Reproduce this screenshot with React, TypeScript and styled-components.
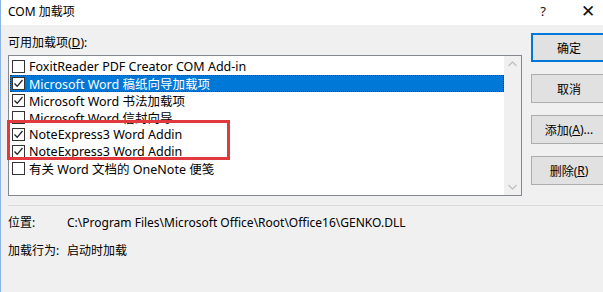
import styled, { createGlobalStyle } from 'styled-components'

const GlobalStyle = createGlobalStyle`
  html, body {
    margin: 0;
    padding: 0;
    background: #f0f0f0;
    overflow: hidden;
  }
  body {
    font-family: "Noto Sans", "Noto Sans CJK SC", sans-serif;
    font-size: 12px;
    color: #000;
  }
`

const Window = styled.div`
  width: 603px;
  height: 292px;
  overflow: hidden;
  background: #f0f0f0;
  border-left: 1px solid #8cb4e4;
  box-sizing: border-box;
  display: flex;
  flex-direction: column;
`

const TitleBar = styled.div`
  height: 25px;
  flex: none;
  background: #fff;
  display: flex;
  align-items: center;
  padding-left: 7px;
  font-size: 12px;
`

const TitleText = styled.span`
  flex: 1;
  margin-top: -3px;
`

const TitleIcon = styled.span<{ $size: number; $width: number }>`
  width: ${(p) => p.$width}px;
  flex: none;
  text-align: center;
  font-size: ${(p) => p.$size}px;
  color: #111;
  margin-top: -4px;
`

const Main = styled.div`
  display: flex;
  padding: 8px 0 0 7px;
  gap: 9px;
`

const LeftColumn = styled.div`
  width: 514px;
  flex: none;
  display: flex;
  flex-direction: column;
`

const Label = styled.div`
  height: 22px;
  line-height: 20px;
`

const Underline = styled.span`
  text-decoration: underline;
`

const ListBox = styled.div`
  position: relative;
  height: 141px;
  border: 1px solid #828790;
  background: #fff;
  display: flex;
  box-sizing: border-box;
`

const Items = styled.div`
  flex: 1;
  padding-top: 2px;
`

const Item = styled.div<{ $selected?: boolean }>`
  height: 17px;
  margin-left: 1px;
  display: flex;
  align-items: center;
  gap: 4px;
  padding-left: 2px;
  box-sizing: border-box;
  background: ${(p) => (p.$selected ? '#0078d7' : 'transparent')};
  color: ${(p) => (p.$selected ? '#fff' : '#000')};
  outline: ${(p) => (p.$selected ? '1px dotted #333' : 'none')};
  outline-offset: -1px;
  white-space: nowrap;
  font-size: 12.5px;
`

const Box = styled.span`
  width: 13px;
  height: 13px;
  flex: none;
  box-sizing: border-box;
  border: 1px solid #333;
  background: #fff;
  display: flex;
  align-items: center;
  justify-content: center;
`

const ScrollBar = styled.div`
  width: 17px;
  flex: none;
  background: #f0f0f0;
  display: flex;
  flex-direction: column;
  justify-content: space-between;
  align-items: center;
  padding: 5px 0;
`

const Highlight = styled.div`
  position: absolute;
  left: -2px;
  top: 64px;
  width: 223px;
  height: 40px;
  border: 3px solid #e2393f;
  box-sizing: border-box;
  pointer-events: none;
`

const ButtonColumn = styled.div`
  flex: none;
  display: flex;
  flex-direction: column;
  gap: 12px;
`

const Button = styled.div<{ $default?: boolean }>`
  width: 76px;
  height: 29px;
  box-sizing: border-box;
  border: ${(p) => (p.$default ? '2px solid #0078d7' : '1px solid #adadad')};
  background: #e1e1e1;
  display: flex;
  align-items: center;
  justify-content: center;
  font-size: 12px;
`

const Separator = styled.div`
  height: 1px;
  background: #dadada;
  margin: 9px 0 0 7px;
`

const InfoRow = styled.div`
  display: flex;
  height: 28px;
  align-items: center;
  padding-left: 7px;
`

const InfoBlock = styled.div`
  padding-top: 2px;
`

const InfoLabel = styled.span`
  width: 59px;
  flex: none;
`

function Check({ checked }: { checked: boolean }) {
  return (
    <Box>
      {checked && (
        <svg width="11" height="11" viewBox="0 0 11 11">
          <path d="M1.5 5.5 L4.2 8.3 L9.5 2" fill="none" stroke="#222" strokeWidth="1.3" />
        </svg>
      )}
    </Box>
  )
}

function Chevron({ up }: { up?: boolean }) {
  return (
    <svg width="9" height="6" viewBox="0 0 9 6">
      <path
        d={up ? 'M0.5 5 L4.5 1 L8.5 5' : 'M0.5 1 L4.5 5 L8.5 1'}
        fill="none"
        stroke="#c2c2c2"
        strokeWidth="1.3"
      />
    </svg>
  )
}

const items = [
  { text: 'FoxitReader PDF Creator COM Add-in', checked: false },
  { text: 'Microsoft Word 稿纸向导加载项', checked: true, selected: true },
  { text: 'Microsoft Word 书法加载项', checked: true },
  { text: 'Microsoft Word 信封向导', checked: false },
  { text: 'NoteExpress3 Word Addin', checked: true },
  { text: 'NoteExpress3 Word Addin', checked: true },
  { text: '有关 Word 文档的 OneNote 便笺', checked: false },
]

export default function App() {
  return (
    <>
      <GlobalStyle />
      <Window>
        <TitleBar>
          <TitleText>COM 加载项</TitleText>
          <TitleIcon $size={13} $width={60}>?</TitleIcon>
          <TitleIcon $size={17} $width={30}>✕</TitleIcon>
        </TitleBar>
        <Main>
          <LeftColumn>
            <Label>
              可用加载项(<Underline>D</Underline>):
            </Label>
            <ListBox>
              <Items>
                {items.map((it, i) => (
                  <Item key={i} $selected={it.selected}>
                    <Check checked={it.checked} />
                    <span>{it.text}</span>
                  </Item>
                ))}
              </Items>
              <ScrollBar>
                <Chevron up />
                <Chevron />
              </ScrollBar>
              <Highlight />
            </ListBox>
          </LeftColumn>
          <ButtonColumn>
            <Button $default>确定</Button>
            <Button>取消</Button>
            <Button>
              添加(<Underline>A</Underline>)...
            </Button>
            <Button>
              删除(<Underline>R</Underline>)
            </Button>
          </ButtonColumn>
        </Main>
        <Separator />
        <InfoBlock>
          <InfoRow>
            <InfoLabel>位置:</InfoLabel>
            <span>C:\Program Files\Microsoft Office\Root\Office16\GENKO.DLL</span>
          </InfoRow>
          <InfoRow>
            <InfoLabel>加载行为:</InfoLabel>
            <span>启动时加载</span>
          </InfoRow>
        </InfoBlock>
      </Window>
    </>
  )
}
